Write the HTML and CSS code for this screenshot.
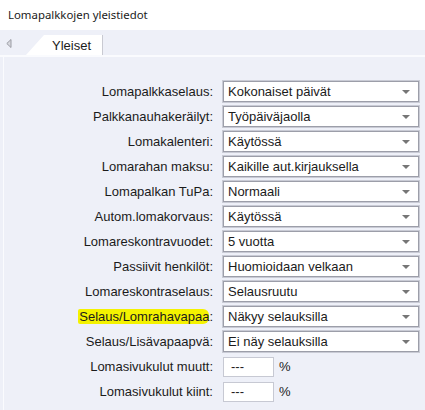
FILE: index.html
```html
<!DOCTYPE html>
<html lang="fi">
<head>
<meta charset="utf-8">
<title>Lomapalkkojen yleistiedot</title>
<link rel="stylesheet" href="styles.css">
</head>
<body>
<div class="title">Lomapalkkojen yleistiedot</div>
<div class="tabstrip">
  <svg class="scroll" width="6" height="9" viewBox="0 0 6 9"><path d="M5 0.5 L0.8 4.5 L5 8.5 Z" fill="#d8d9df" stroke="#9a9ba3" stroke-width="1"/></svg>
  <div class="tab"><span>Yleiset</span></div>
</div>
<div class="area">
  <div class="panel">
    <div class="form">
      <label>Lomapalkkaselaus:</label><div class="sel"><span>Kokonaiset päivät</span><i></i></div>
      <label>Palkkanauhakeräilyt:</label><div class="sel"><span>Työpäiväjaolla</span><i></i></div>
      <label>Lomakalenteri:</label><div class="sel"><span>Käytössä</span><i></i></div>
      <label>Lomarahan maksu:</label><div class="sel"><span>Kaikille aut.kirjauksella</span><i></i></div>
      <label>Lomapalkan TuPa:</label><div class="sel"><span>Normaali</span><i></i></div>
      <label>Autom.lomakorvaus:</label><div class="sel"><span>Käytössä</span><i></i></div>
      <label>Lomareskontravuodet:</label><div class="sel"><span>5 vuotta</span><i></i></div>
      <label>Passiivit henkilöt:</label><div class="sel"><span>Huomioidaan velkaan</span><i></i></div>
      <label>Lomareskontraselaus:</label><div class="sel"><span>Selausruutu</span><i></i></div>
      <label><mark>Selaus/Lomrahavapaa</mark>:</label><div class="sel"><span>Näkyy selauksilla</span><i></i></div>
      <label>Selaus/Lisävapaapvä:</label><div class="sel"><span>Ei näy selauksilla</span><i></i></div>
      <label>Lomasivukulut muutt:</label><div class="pct"><div class="inp">---</div><span>%</span></div>
      <label>Lomasivukulut kiint:</label><div class="pct"><div class="inp">---</div><span>%</span></div>
    </div>
  </div>
</div>
</body>
</html>
```

FILE: styles.css
```css
html, body {
  margin: 0;
  padding: 0;
  background: #ffffff;
  width: 425px;
  height: 410px;
  overflow: hidden;
}
body {
  font-family: "Liberation Sans", Arial, sans-serif;
  font-size: 13px;
  color: #1b1b1b;
  display: flex;
  flex-direction: column;
}
.title {
  height: 30px;
  line-height: 30px;
  padding-left: 8px;
  font-family: "Noto Sans", "Open Sans", sans-serif;
  font-size: 11.4px;
  color: #1a1a1a;
}
.tabstrip {
  height: 25px;
  background: #eef0f8;
  display: flex;
  align-items: flex-end;
}
.scroll {
  margin: 0 0 7px 6px;
}
.tab {
  margin-left: 14px;
  width: 77px;
  height: 20px;
  background: #ffffff;
  border-right: 1px solid #c9cad2;
  clip-path: polygon(18px 0, 100% 0, 100% 100%, 0 100%);
  display: flex;
  align-items: center;
  justify-content: flex-end;
  padding-right: 11px;
  box-sizing: border-box;
  font-size: 13px;
}
.area {
  flex: 1;
  background: #eef0f8;
  border-top: 2px solid #fafbfe;
}
.panel {
  margin-left: 3px;
  height: 100%;
  border-left: 1px solid #fafbfe;
}
.form {
  display: grid;
  grid-template-columns: 209px 196px;
  column-gap: 10px;
  row-gap: 4px;
  grid-auto-rows: 21px;
  padding-top: 24px;
}
label {
  justify-self: end;
  align-self: center;
  white-space: nowrap;
  line-height: 17px;
}
mark {
  background: #f4f200;
  color: inherit;
  padding: 0 0 0 1px;
  border-radius: 2px 6px 6px 2px;
}
.sel {
  background: #ffffff;
  border: 1px solid #9c9ea9;
  box-shadow: 0 0 0 1px #c9cbd5;
  display: flex;
  align-items: center;
  justify-content: space-between;
  padding: 0 8px 0 4px;
  box-sizing: border-box;
  height: 21px;
}
.sel i {
  width: 0;
  height: 0;
  border-left: 4px solid transparent;
  border-right: 4px solid transparent;
  border-top: 4px solid #767676;
  margin-top: 1px;
}
.pct {
  display: flex;
  align-items: center;
  gap: 5px;
}
.inp {
  width: 51px;
  height: 20px;
  box-sizing: border-box;
  background: #ffffff;
  border: 1px solid #c7c9d3;
  padding-left: 7px;
  line-height: 18px;
}
```
